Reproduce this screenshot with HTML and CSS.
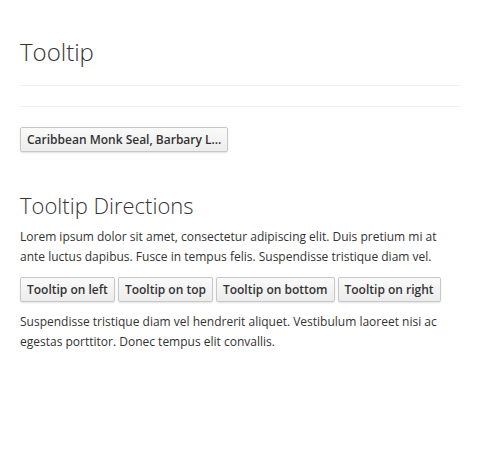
FILE: index.html
```html
<!DOCTYPE html>
<html>
<head>
<meta charset="utf-8">
<link rel="stylesheet" href="styles.css">
</head>
<body>
<div class="page">
  <h1 class="title">Tooltip</h1>
  <hr class="rule rule-first">
  <hr class="rule rule-second">
  <div class="single-row">
    <button class="btn">Caribbean Monk Seal, Barbary L…</button>
  </div>
  <h2 class="section-title">Tooltip Directions</h2>
  <p class="text text-first">Lorem ipsum dolor sit amet, consectetur adipiscing elit. Duis pretium mi at ante luctus dapibus. Fusce in tempus felis. Suspendisse tristique diam vel.</p>
  <div class="btn-row">
    <button class="btn">Tooltip on left</button>
    <button class="btn">Tooltip on top</button>
    <button class="btn">Tooltip on bottom</button>
    <button class="btn">Tooltip on right</button>
  </div>
  <p class="text text-second">Suspendisse tristique diam vel hendrerit aliquet. Vestibulum laoreet nisi ac egestas porttitor. Donec tempus elit convallis.</p>
</div>
</body>
</html>
```
FILE: styles.css
```css
html, body {
  margin: 0;
  padding: 0;
  background: #fff;
}
body {
  font-family: "Open Sans", "DejaVu Sans", sans-serif;
  color: #333;
}
.page {
  padding: 37px 20px 20px 20px;
}
.title {
  margin: 0;
  font-size: 24px;
  font-weight: 300;
  line-height: 30px;
  color: #333;
}
.rule {
  border: 0;
  height: 1px;
  background: #eee;
  margin: 0;
}
.rule-first {
  margin-top: 18px;
}
.rule-second {
  margin-top: 20px;
}
.single-row {
  margin-top: 20px;
  display: flex;
}
.btn {
  font-family: "Open Sans", "DejaVu Sans", sans-serif;
  font-size: 12px;
  font-weight: 600;
  line-height: 17px;
  color: #333;
  padding: 3px 6px;
  border: 1px solid #c8c8c8;
  border-radius: 2px;
  background: linear-gradient(to bottom, #fafafa 0%, #ececec 100%);
  box-shadow: 0 1px 2px rgba(0,0,0,0.12);
  white-space: nowrap;
  cursor: pointer;
}
.section-title {
  margin: 38px 0 0 0;
  font-size: 22px;
  font-weight: 300;
  line-height: 30px;
  color: #333;
}
.text {
  font-size: 12px;
  line-height: 20px;
  margin: 0;
}
.text-first {
  margin-top: 7px;
}
.btn-row {
  display: flex;
  gap: 3px;
  margin-top: 10px;
}
.text-second {
  margin-top: 10px;
}
```
